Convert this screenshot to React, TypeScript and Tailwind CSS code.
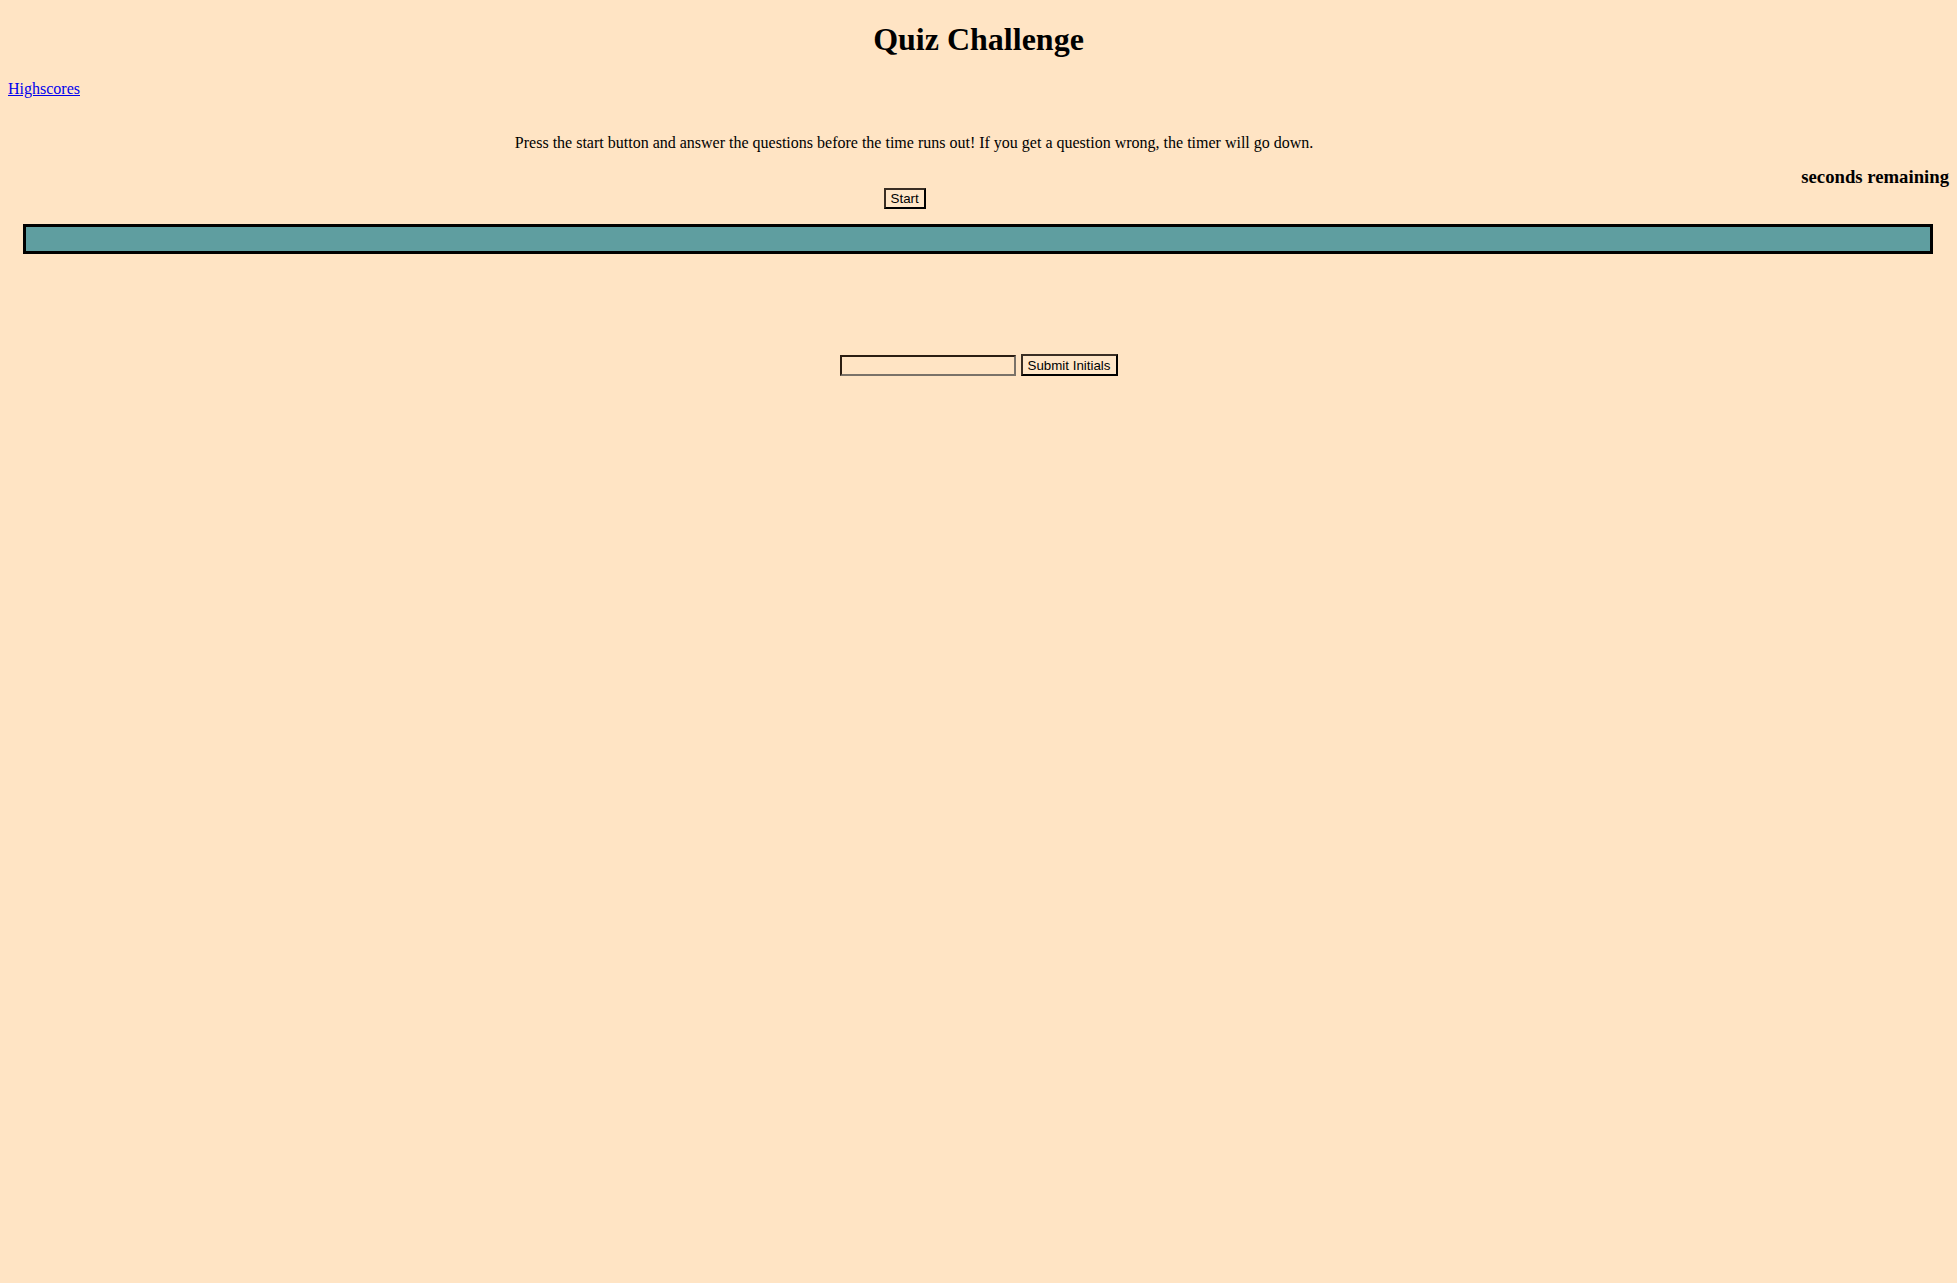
import React from "react";

export default function App() {
  return (
    <div className="min-h-screen bg-[#ffe4c4] px-2 pt-[21px] pb-2 font-['Liberation_Serif',serif] text-black">
      <h1 className="text-center text-[32px] font-bold leading-[37px]">Quiz Challenge</h1>
      <div className="mt-[22px] text-[16px] leading-[18px]">
        <a href="#" className="text-[#0000ee] underline">
          Highscores
        </a>
      </div>
      <div className="flex">
        <div className="flex-1 text-center">
          <p className="mt-[36px] pl-[19px] text-[16px] leading-[18px]">
            Press the start button and answer the questions before the time runs out! If you get a question wrong, the timer will go down.
          </p>
          <div className="mt-[36px] flex justify-center">
            <button className="flex h-[21px] w-[42px] items-center justify-center border-2 border-t-[#3a2e24] border-l-[#3a2e24] border-r-black border-b-black bg-[#ffe6c8] font-['Liberation_Sans',Arial,sans-serif] text-[13.33px] leading-[normal] text-black">
              Start
            </button>
          </div>
        </div>
        <h3 className="mt-[68px] text-[18.72px] font-bold leading-[21px]">seconds remaining</h3>
      </div>
      <div className="mt-[15px] ml-[15px] mr-[16px] h-[30px] border-[3px] border-black bg-[#5f9ea0]" />
      <div className="mt-[100px] flex items-center justify-center gap-[5px]">
        <input
          type="text"
          className="h-[21px] w-[176px] border-2 border-t-[#2b1d12] border-l-[#2b1d12] border-r-[#7a7269] border-b-[#7a7269] bg-transparent px-[2px] font-['Liberation_Sans',Arial,sans-serif] text-[13.33px] outline-none"
        />
        <button className="flex h-[22px] w-[97px] items-center justify-center border-2 border-t-[#3a2e24] border-l-[#3a2e24] border-r-black border-b-black bg-[#ffe6c8] font-['Liberation_Sans',Arial,sans-serif] text-[13.33px] leading-[normal] text-black">
          Submit Initials
        </button>
      </div>
    </div>
  );
}
